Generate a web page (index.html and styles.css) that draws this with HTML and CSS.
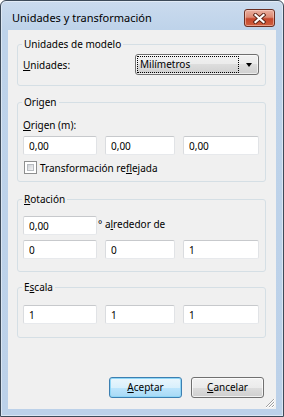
FILE: index.html
```html
<!DOCTYPE html>
<html lang="es">
<head>
<meta charset="utf-8">
<title>Unidades y transformación</title>
<link rel="stylesheet" href="styles.css">
</head>
<body>
<div class="window">
  <div class="titlebar">
    <span class="title">Unidades y transformación</span>
    <button class="close" aria-label="Cerrar">
      <svg width="13" height="11" viewBox="0 0 13 11">
        <path d="M2.5 2 L10.5 9 M10.5 2 L2.5 9" stroke="#5a2418" stroke-width="4" stroke-linecap="square" fill="none"/>
        <path d="M2.5 2 L10.5 9 M10.5 2 L2.5 9" stroke="#ffffff" stroke-width="2.2" stroke-linecap="square" fill="none"/>
      </svg>
    </button>
  </div>
  <div class="client">
    <fieldset class="group g-units">
      <legend>Unidades de modelo</legend>
      <div class="units-row">
        <span class="label"><u>U</u>nidades:</span>
        <div class="select">
          <span class="select-text">Milímetros</span>
          <span class="arrow"></span>
        </div>
      </div>
    </fieldset>

    <fieldset class="group g-origin">
      <legend>Origen</legend>
      <div class="label block"><u>O</u>rigen (m):</div>
      <div class="triple">
        <input class="field" type="text" value="0,00">
        <input class="field" type="text" value="0,00">
        <input class="field" type="text" value="0,00">
      </div>
      <div class="check-row">
        <span class="checkbox"><span class="checkbox-inner"></span></span>
        <span class="label">Transformación re<u>f</u>lejada</span>
      </div>
    </fieldset>

    <fieldset class="group g-rot">
      <legend><u>R</u>otación</legend>
      <div class="angle-row">
        <input class="field angle" type="text" value="0,00">
        <span class="label">° a<u>l</u>rededor de</span>
      </div>
      <div class="triple">
        <input class="field" type="text" value="0">
        <input class="field" type="text" value="0">
        <input class="field" type="text" value="1">
      </div>
    </fieldset>

    <fieldset class="group g-scale">
      <legend>E<u>s</u>cala</legend>
      <div class="triple">
        <input class="field" type="text" value="1">
        <input class="field" type="text" value="1">
        <input class="field" type="text" value="1">
      </div>
    </fieldset>

    <div class="buttons">
      <button class="btn default"><u>A</u>ceptar</button>
      <button class="btn"><u>C</u>ancelar</button>
    </div>

    <svg class="grip" width="10" height="10" viewBox="0 0 10 10">
      <path d="M9 1 L1 9 M9 4 L4 9 M9 7 L7 9" stroke="#a0a0a0" stroke-width="1" fill="none"/>
      <path d="M10 1 L1 10 M10 4 L4 10 M10 7 L7 10" stroke="#ffffff" stroke-width="1" fill="none"/>
    </svg>
  </div>
</div>
</body>
</html>
```
FILE: styles.css
```css
html, body {
  margin: 0;
  padding: 0;
  background: #ffffff;
}

body {
  font-family: "Noto Sans", "Open Sans", sans-serif;
  font-size: 10px;
  color: #000;
}

.window {
  width: 284px;
  height: 417px;
  box-sizing: border-box;
  border: 1px solid #3d4a59;
  border-radius: 6px 6px 0 0;
  background: linear-gradient(#cbdbee, #bed3ea 28px, #bcd1e9);
  box-shadow: inset 0 0 0 1px rgba(255, 255, 255, 0.45);
  display: flex;
  flex-direction: column;
}

.titlebar {
  height: 29px;
  flex: none;
  display: flex;
  align-items: flex-start;
  padding: 0 8px 0 11px;
}

.title {
  font-size: 11px;
  line-height: 16px;
  margin-top: 9px;
  color: #000;
}

.close {
  margin-left: auto;
  margin-top: 8px;
  width: 31px;
  height: 18px;
  box-sizing: border-box;
  padding: 0;
  border: 1px solid #6a2e22;
  border-radius: 3px;
  background: linear-gradient(#eab0a1, #dc8a74 45%, #c5462c 55%, #d0603f);
  box-shadow: inset 0 0 0 1px rgba(255, 220, 210, 0.5);
  display: flex;
  align-items: center;
  justify-content: center;
}

.close svg {
  display: block;
}

.client {
  flex: 1;
  margin: 0 7px 7px;
  background: #f0f0f0;
  box-sizing: border-box;
  padding: 7px 10px 11px 9px;
  display: flex;
  flex-direction: column;
  position: relative;
}

.group {
  margin: 0;
  border: 1px solid #d5dfe5;
  border-radius: 3px;
  min-inline-size: 0;
}

.group legend {
  padding: 0 2px;
  margin-left: -1px;
  line-height: 15px;
  font-size: 10px;
}

.g-units {
  padding: 2px 6px 10px 5px;
}

.g-origin {
  margin-top: 9px;
  padding: 7px 6px 6px 5px;
}

.g-rot {
  margin-top: 10px;
  padding: 9px 6px 12px 5px;
}

.g-scale {
  margin-top: 8px;
  padding: 10px 6px 13px 5px;
}

.units-row {
  display: flex;
  align-items: center;
  height: 21px;
}

.label {
  line-height: 16px;
  white-space: nowrap;
}

.label.block {
  display: block;
}

.select {
  margin-left: auto;
  width: 124px;
  height: 21px;
  box-sizing: border-box;
  border: 1px solid #707070;
  border-radius: 3px;
  background: linear-gradient(#f2f2f2, #ebebeb 50%, #dddddd 50%, #cfcfcf);
  box-shadow: inset 0 0 0 1px rgba(255, 255, 255, 0.6);
  display: flex;
  align-items: center;
  padding: 0 6px 0 1px;
}

.select-text {
  width: 102px;
  height: 17px;
  box-sizing: border-box;
  border: 1px dotted #000;
  line-height: 15px;
  padding-left: 2px;
}

.arrow {
  margin-left: auto;
  width: 0;
  height: 0;
  border-left: 3.5px solid transparent;
  border-right: 3.5px solid transparent;
  border-top: 4px solid #000;
}

.triple {
  display: grid;
  grid-template-columns: 74px 70px 1fr;
  column-gap: 8px;
}

.g-origin .triple {
  margin-top: 3px;
}

.g-rot .triple {
  margin-top: 5px;
}

.field {
  display: block;
  width: 100%;
  height: 19px;
  box-sizing: border-box;
  margin: 0;
  border: 1px solid;
  border-color: #c7c9cc #e1e3e6 #e7e9ec #dadcdf;
  border-radius: 2px;
  background: #fff;
  padding: 0 0 0 5px;
  font: inherit;
  color: #000;
  outline: none;
}

.angle-row {
  display: flex;
  align-items: flex-start;
}

.field.angle {
  width: 74px;
  flex: none;
  margin-right: 1px;
}

.check-row {
  display: flex;
  align-items: center;
  height: 15px;
  margin-top: 5px;
}

.checkbox {
  width: 13px;
  height: 13px;
  box-sizing: border-box;
  border: 1px solid #8e8f8f;
  background: #fff;
  padding: 2px;
  margin: 0 3px 0 1px;
  flex: none;
}

.checkbox-inner {
  display: block;
  width: 100%;
  height: 100%;
  border: 1px solid #b8bcc1;
  box-sizing: border-box;
  background: linear-gradient(135deg, #cfd2d6, #f4f4f4);
}

.buttons {
  margin-top: auto;
  display: flex;
  justify-content: flex-end;
  gap: 9px;
  padding-right: 2px;
}

.btn {
  width: 73px;
  height: 21px;
  box-sizing: border-box;
  padding: 0;
  border: 1px solid #707070;
  border-radius: 3px;
  background: linear-gradient(#f2f2f2, #ebebeb 50%, #dddddd 50%, #cfcfcf);
  box-shadow: inset 0 0 0 1px rgba(255, 255, 255, 0.7);
  font: inherit;
  color: #000;
  line-height: 17px;
}

.btn.default {
  border-color: #3c7fb1;
  background: linear-gradient(#eaf6fd, #d9f0fc 50%, #bee6fd 50%, #a7d9f5);
  box-shadow: inset 0 0 0 1px #8fd6f6;
}

.grip {
  position: absolute;
  right: 1px;
  bottom: 1px;
  display: block;
}
```
